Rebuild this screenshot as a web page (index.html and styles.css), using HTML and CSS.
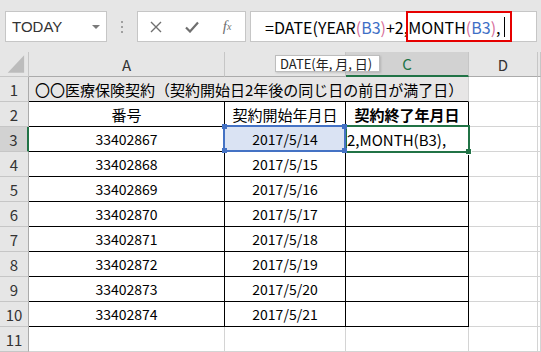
FILE: index.html
```html
<!DOCTYPE html>
<html>
<head>
  <meta charset="UTF-8">
  <title>DATE関数</title>
  <link rel="stylesheet" href="styles.css">
</head>
<body>

<!-- 名前ボックスと数式バー -->
<div class="topbar">
  <div class="namebox"><span>TODAY</span><span class="drop"></span></div>
  <div class="grip"><i></i><i></i><i></i></div>
  <div class="fbtns">
    <span class="btn">
      <svg width="12" height="12" viewBox="0 0 12 12"><path d="M1 1L11 11M11 1L1 11" stroke="#6f6f6f" stroke-width="1.4" fill="none"/></svg>
    </span>
    <span class="btn">
      <svg width="14" height="12" viewBox="0 0 14 12"><path d="M1 6.5L5 10.5L13 1.5" stroke="#6f6f6f" stroke-width="2.2" fill="none"/></svg>
    </span>
    <span class="btn fx"><i>f</i><sub>x</sub></span>
  </div>
  <div class="formula">
    <span>=DATE(YEAR<span class="p1">(</span><span class="r1">B3</span><span class="p1">)</span>+2,</span><span class="hl">MONTH<span class="p1">(</span><span class="r1">B3</span><span class="p1">)</span>,<span class="cursor"></span></span>
  </div>
</div>

<!-- シート -->
<div class="sheet">
  <div class="c h corner"><svg width="29" height="24" viewBox="0 0 29 24"><polygon points="25,3 25,21 8,21" fill="#bcbcbc"/></svg></div>
  <div class="c h ch">A</div>
  <div class="c h ch"></div>
  <div class="c h ch selcol">C</div>
  <div class="c h ch">D</div>
  <div class="c h ch"></div>

  <div class="c h rh">1</div>
  <div class="c title jp">〇〇医療保険契約（契約開始日2年後の同じ日の前日が満了日）</div>
  <div class="c"></div>
  <div class="c"></div>

  <div class="c h rh">2</div>
  <div class="c t jp">番号</div>
  <div class="c t jp">契約開始年月日</div>
  <div class="c t jp bold">契約終了年月日</div>
  <div class="c"></div>
  <div class="c"></div>

  <div class="c h rh selrow">3</div>
  <div class="c t">33402867</div>
  <div class="c t ref">2017/5/14</div>
  <div class="c t active">2,MONTH(B3),</div>
  <div class="c"></div>
  <div class="c"></div>

  <div class="c h rh">4</div>
  <div class="c t">33402868</div>
  <div class="c t">2017/5/15</div>
  <div class="c t"></div>
  <div class="c"></div>
  <div class="c"></div>

  <div class="c h rh">5</div>
  <div class="c t">33402869</div>
  <div class="c t">2017/5/16</div>
  <div class="c t"></div>
  <div class="c"></div>
  <div class="c"></div>

  <div class="c h rh">6</div>
  <div class="c t">33402870</div>
  <div class="c t">2017/5/17</div>
  <div class="c t"></div>
  <div class="c"></div>
  <div class="c"></div>

  <div class="c h rh">7</div>
  <div class="c t">33402871</div>
  <div class="c t">2017/5/18</div>
  <div class="c t"></div>
  <div class="c"></div>
  <div class="c"></div>

  <div class="c h rh">8</div>
  <div class="c t">33402872</div>
  <div class="c t">2017/5/19</div>
  <div class="c t"></div>
  <div class="c"></div>
  <div class="c"></div>

  <div class="c h rh">9</div>
  <div class="c t">33402873</div>
  <div class="c t">2017/5/20</div>
  <div class="c t"></div>
  <div class="c"></div>
  <div class="c"></div>

  <div class="c h rh">10</div>
  <div class="c t">33402874</div>
  <div class="c t">2017/5/21</div>
  <div class="c t"></div>
  <div class="c"></div>
  <div class="c"></div>

  <div class="c h rh">11</div>
  <div class="c"></div>
  <div class="c"></div>
  <div class="c"></div>
  <div class="c"></div>
  <div class="c"></div>
</div>

<!-- 関数のヒント -->
<div class="tip">DATE(年, 月, 日)</div>

</body>
</html>
```

FILE: styles.css
```css
body {
  margin: 0;
  width: 541px;
  height: 352px;
  overflow: hidden;
  background: #fff;
  font-family: "Noto Sans CJK JP", "Liberation Sans", sans-serif;
  color: #000;
}

/* 上部バー */
.topbar {
  display: flex;
  align-items: flex-start;
  height: 52px;
  box-sizing: border-box;
  padding: 11px 0 0 5px;
  background: #e6e6e6;
}
.namebox {
  width: 102px;
  height: 31px;
  box-sizing: border-box;
  border: 1px solid #c6c6c6;
  background: #fff;
  display: flex;
  align-items: center;
  padding-left: 6px;
  font: 15px "Liberation Sans", sans-serif;
  color: #333;
}
.drop {
  margin-left: auto;
  margin-right: 6px;
  border-left: 4px solid transparent;
  border-right: 4px solid transparent;
  border-top: 4px solid #7a7a7a;
}
.grip {
  width: 30px;
  height: 31px;
  display: flex;
  flex-direction: column;
  align-items: center;
  justify-content: center;
  gap: 3px;
}
.grip i {
  width: 2px;
  height: 2px;
  background: #a0a0a0;
}
.fbtns {
  width: 109px;
  height: 31px;
  box-sizing: border-box;
  border: 1px solid #c6c6c6;
  background: #fff;
  display: flex;
}
.btn {
  width: 36px;
  display: flex;
  align-items: center;
  justify-content: center;
}
.fx {
  font: italic 15px "Liberation Serif", serif;
  color: #6f6f6f;
}
.fx sub {
  font-size: 10px;
  vertical-align: -2px;
}
.formula {
  flex: 1;
  margin: 0 4px;
  height: 31px;
  box-sizing: border-box;
  border: 1px solid #c6c6c6;
  background: #fff;
  display: flex;
  align-items: center;
  padding-left: 14px;
  font-size: 16px;
  white-space: nowrap;
}
.p1 { color: #d86f9c; }
.r1 { color: #3f6fc6; }
.hl {
  display: inline-flex;
  align-items: center;
  height: 31px;
  box-sizing: border-box;
  border: 2px solid #e60000;
  padding: 0 5px 0 0;
  margin-left: -2px;
}
.cursor {
  display: inline-block;
  width: 1px;
  height: 20px;
  background: #000;
  margin-left: 3px;
}

/* シート */
.sheet {
  display: grid;
  grid-template-columns: 29px 196px 121px 123px 69px 1fr;
  grid-auto-rows: 25px;
}
.c {
  box-sizing: border-box;
  border-right: 1px solid #d4d4d4;
  border-bottom: 1px solid #d4d4d4;
  display: flex;
  align-items: center;
  justify-content: center;
  font-size: 14px;
  white-space: nowrap;
  overflow: hidden;
}
.jp { font-size: 15px; }
.h {
  background: #e6e6e6;
  color: #333;
  font-size: 15px;
  border-right-color: #c6c6c6;
  border-bottom-color: #c6c6c6;
}
.corner { justify-content: flex-start; align-items: flex-start; }
.ch { border-bottom-color: #ababab; }
.rh { border-right-color: #ababab; }
.selcol {
  background: #d2d2d2;
  color: #217346;
  border-bottom: 2px solid #217346;
}
.selrow {
  background: #d2d2d2;
  border-right: 2px solid #217346;
}
.title {
  grid-column: span 3;
  justify-content: flex-start;
  padding-left: 6px;
  background: #e7e6e6;
  border-bottom-color: #000;
}
.t {
  border-right-color: #000;
  border-bottom-color: #000;
}
.bold { font-weight: bold; }

/* B3 の参照枠 */
.ref {
  position: relative;
  overflow: visible;
  background: #dae3f3;
}
.ref::before {
  content: "";
  position: absolute;
  left: -2px;
  top: -2px;
  right: -1px;
  bottom: -1px;
  border: 2px solid #4472c4;
  z-index: 2;
}
.ref::after {
  content: "";
  position: absolute;
  left: -3px;
  top: -3px;
  right: -2px;
  bottom: -2px;
  z-index: 2;
  background:
    linear-gradient(#4472c4, #4472c4) left top / 5px 5px no-repeat,
    linear-gradient(#4472c4, #4472c4) right top / 5px 5px no-repeat,
    linear-gradient(#4472c4, #4472c4) left bottom / 5px 5px no-repeat,
    linear-gradient(#4472c4, #4472c4) right bottom / 5px 5px no-repeat;
}

/* アクティブセル C3 */
.active {
  position: relative;
  overflow: visible;
  justify-content: flex-start;
  padding-left: 1px;
  font-size: 15px;
}
.active::after {
  content: "";
  position: absolute;
  left: -1px;
  top: -2px;
  right: -2px;
  bottom: -2px;
  border: 2px solid #217346;
  z-index: 1;
}
.active::before {
  content: "";
  position: absolute;
  right: -4px;
  bottom: -4px;
  width: 5px;
  height: 5px;
  background: #217346;
  border: 1px solid #fff;
  z-index: 1;
}

/* 関数ヒント */
.tip {
  position: absolute;
  left: 275px;
  top: 55px;
  height: 17px;
  box-sizing: border-box;
  padding: 0 4px;
  border: 1px solid #bdbdbd;
  background: #fff;
  box-shadow: 1px 1px 2px rgba(0, 0, 0, 0.15);
  font-size: 13px;
  line-height: 15px;
  color: #222;
  width: 105px;
  white-space: nowrap;
}
```
